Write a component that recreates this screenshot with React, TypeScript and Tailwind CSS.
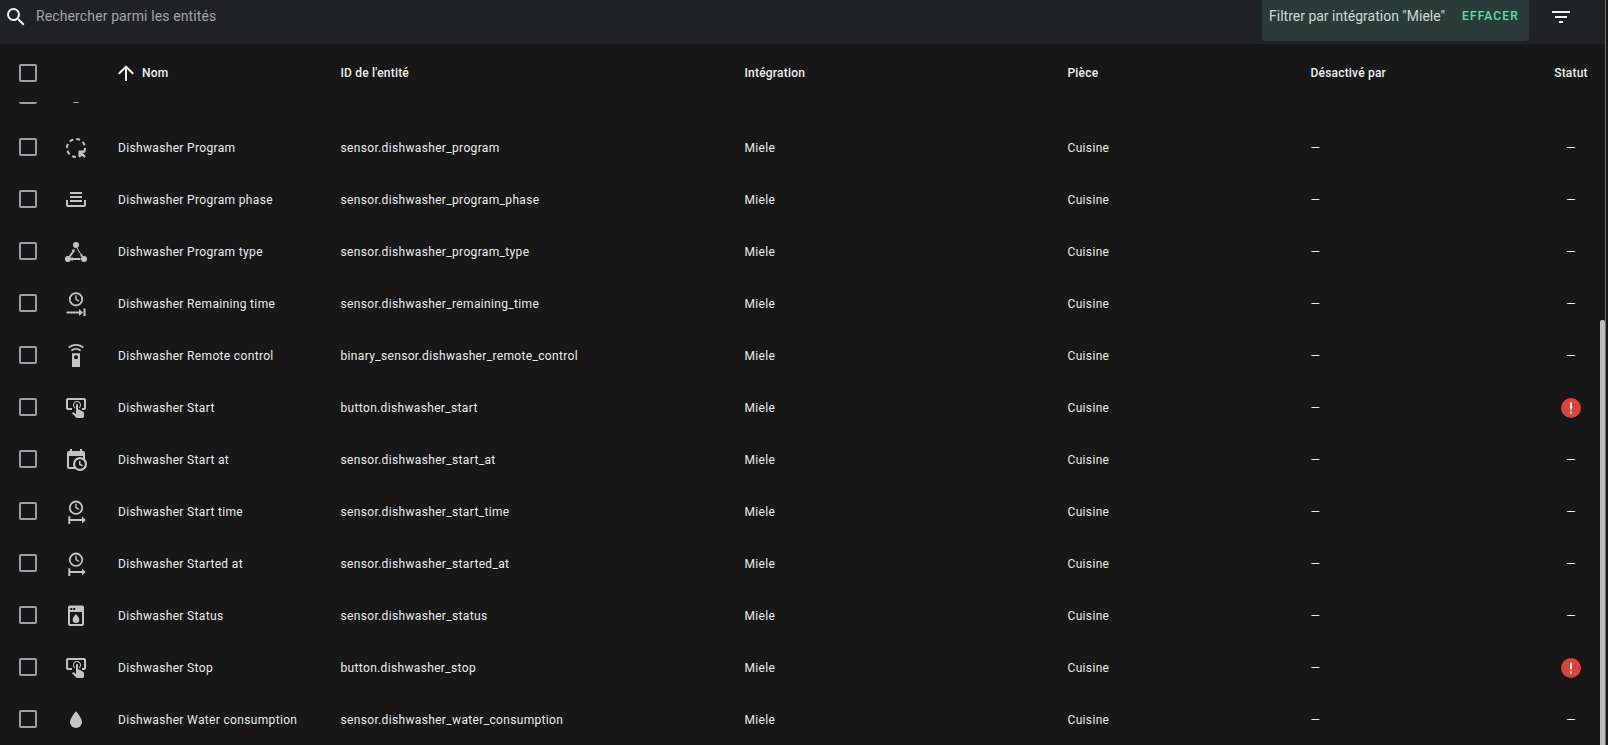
import React from "react";

const P = ({ d, s = 24, c = "" }: { d: string; s?: number; c?: string }) => (
  <svg viewBox="0 0 24 24" width={s} height={s} fill="currentColor" className={c}>
    <path d={d} />
  </svg>
);

const Ico = ({ children }: { children: React.ReactNode }) => (
  <svg viewBox="0 0 24 24" width={24} height={24} fill="currentColor" className="text-[#c4c4c4]">
    {children}
  </svg>
);

const tap =
  "M13 5C15.21 5 17 6.79 17 9C17 10.5 16.2 11.77 15 12.46V11.24C15.61 10.69 16 9.89 16 9C16 7.34 14.66 6 13 6S10 7.34 10 9C10 9.89 10.39 10.69 11 11.24V12.46C9.8 11.77 9 10.5 9 9C9 6.79 10.79 5 13 5M20 20.5C19.97 21.32 19.32 21.97 18.5 22H13C12.62 22 12.26 21.85 12 21.57L8 17.37L8.74 16.6C8.93 16.39 9.2 16.28 9.5 16.28H9.7L12 18V9C12 8.45 12.45 8 13 8S14 8.45 14 9V13.47L15.21 13.6L19.15 15.79C19.68 16.03 20 16.56 20 17.14V20.5M20 2H4C2.9 2 2 2.9 2 4V12C2 13.11 2.9 14 4 14H8V12L4 12L4 4H20L20 12H18V14H20V13.96L20.04 14C21.13 14 22 13.09 22 12V4C22 2.9 21.11 2 20 2Z";

const ClockTop = ({ cy }: { cy: number }) => (
  <>
    <circle cx="12" cy={cy} r="6.2" fill="none" stroke="currentColor" strokeWidth="1.8" />
    <path d={`M11.3 ${cy - 4}h1.400v3.600l2.700 1.600-.7 1.200-3.400-2z`} />
  </>
);

const icons: Record<string, React.ReactNode> = {
  program: (
    <>
      <circle cx="12" cy="12" r="9" fill="none" stroke="currentColor" strokeWidth="2" strokeDasharray="3.9 3.17" />
      <path d="M14.500 14.500h6.500v2.200h-2.600l3.500 3.500-1.700 1.500-3.500-3.500v2.600h-2.200z" />
    </>
  ),
  phase: <path d="M6 4h12v2H6zM6 8h12v2H6zM6 12h12v2H6zM2 12h2v5h16v-5h2v5a2 2 0 0 1-2 2H4a2 2 0 0 1-2-2z" />,
  type: (
    <>
      <circle cx="12" cy="5" r="3" />
      <circle cx="3.900" cy="19" r="3" />
      <circle cx="20" cy="19" r="3" />
      <path d="M13.300 7.500l4.200 7.100 1-.6.300 3.300-2.900-1.400 1-.6-4.200-7.100zM10 12l-4 5.600-1.500-1 4-5.600-1-.7 3-1.500.2 3.300zM8.500 18h8v2h-8v1.300L5.800 19l2.700-2.300z" />
    </>
  ),
  remaining: (
    <>
      <ClockTop cy={7.300} />
      <path d="M2.500 19.500H15V17l4 3.500-4 3.500v-2.500H2.500zM19.500 16.500h2V24h-2z" />
    </>
  ),
  remote: (
    <>
      <path d="M12 0c-3 0-5.700 1.100-7.800 3l1.100 1.300C7.100 2.600 9.400 1.700 12 1.700s4.900.9 6.700 2.600L19.800 3C17.700 1.100 15 0 12 0M12 4c-2 0-3.800.7-5.200 2l1.100 1.300C9 6.300 10.400 5.700 12 5.700s3 .6 4.100 1.600L17.200 6C15.800 4.700 14 4 12 4" />
      <path d="M8 9.300h8V23H8zm4 2a2 2 0 1 0 0 4 2 2 0 0 0 0-4" fillRule="evenodd" />
    </>
  ),
  tap: <path d={tap} />,
  calendar: (
    <path d="M15,13H16.5V15.82L18.94,17.23L18.19,18.53L15,16.69V13M19,8H5V19H9.67C9.24,18.09 9,17.07 9,16A7,7 0 0,1 16,9C17.07,9 18.09,9.24 19,9.67V8M5,21C3.89,21 3,20.1 3,19V5C3,3.89 3.89,3 5,3H6V1H8V3H16V1H18V3H19A2,2 0 0,1 21,5V11.1C22.24,12.36 23,14.09 23,16A7,7 0 0,1 16,23C14.09,23 12.36,22.24 11.1,21H5M16,11.15A4.85,4.85 0 0,0 11.15,16C11.15,18.68 13.32,20.85 16,20.85A4.85,4.85 0 0,0 20.85,16C20.85,13.32 18.68,11.15 16,11.15Z" />
  ),
  start: (
    <>
      <ClockTop cy={7.700} />
      <path d="M6.300 19H18V16.500l3.800 3.500-3.800 3.500V21H6.300zM4.300 16.300h2V24h-2z" />
    </>
  ),
  status: (
    <path
      fillRule="evenodd"
      d="M6 1.500h12a2 2 0 0 1 2 2v16.500a2 2 0 0 1-2 2H6a2 2 0 0 1-2-2V3.500a2 2 0 0 1 2-2m0 6.500v12h12V8zm.2-4v2h2V4zm3 0v2h2V4zm2.800 6s3.300 3.400 3.300 5.700a3.300 3.300 0 0 1-6.600 0c0-2.300 3.300-5.700 3.300-5.700"
    />
  ),
  water: <path d="M12,20A6,6 0 0,1 6,14C6,10 12,3.25 12,3.25C12,3.25 18,10 18,14A6,6 0 0,1 12,20Z" />,
};

const rows: [string, string, string, boolean?][] = [
  ["Dishwasher Program", "sensor.dishwasher_program", "program"],
  ["Dishwasher Program phase", "sensor.dishwasher_program_phase", "phase"],
  ["Dishwasher Program type", "sensor.dishwasher_program_type", "type"],
  ["Dishwasher Remaining time", "sensor.dishwasher_remaining_time", "remaining"],
  ["Dishwasher Remote control", "binary_sensor.dishwasher_remote_control", "remote"],
  ["Dishwasher Start", "button.dishwasher_start", "tap", true],
  ["Dishwasher Start at", "sensor.dishwasher_start_at", "calendar"],
  ["Dishwasher Start time", "sensor.dishwasher_start_time", "start"],
  ["Dishwasher Started at", "sensor.dishwasher_started_at", "start"],
  ["Dishwasher Status", "sensor.dishwasher_status", "status"],
  ["Dishwasher Stop", "button.dishwasher_stop", "tap", true],
  ["Dishwasher Water consumption", "sensor.dishwasher_water_consumption", "water"],
];

const Box = () => <div className="w-[18px] h-[18px] rounded-[2px] border-2 border-[#9aa0a8] shrink-0" />;

const Row = ({ name, id, icon, err }: { name: string; id: string; icon: string; err?: boolean }) => (
  <div className="flex items-center h-[52px] shrink-0 text-[12px] tracking-[0.34px] text-[#ececec]">
    <div className="w-[64px] pl-[19px] mb-[2px]">
      <Box />
    </div>
    <div className="w-[54px]">
      <Ico>{icons[icon]}</Ico>
    </div>
    <div className="w-[222.5px]">{name}</div>
    <div className="w-[404px]">{id}</div>
    <div className="w-[323px]">Miele</div>
    <div className="w-[243px]">Cuisine</div>
    <div className="w-[223.500px]">—</div>
    <div className="w-[74px] flex justify-center">
      {err ? (
        <svg viewBox="0 0 20 20" width={20} height={20}>
          <circle cx="10" cy="10" r="10" fill="#db4437" />
          <path d="M9 4.500h2v7H9zM9 13.500h2v2H9z" fill="#fff" />
        </svg>
      ) : (
        "—"
      )}
    </div>
  </div>
);

export default function App() {
  return (
    <div className="relative w-[1608px] h-[745px] overflow-hidden bg-[#171717] flex flex-col font-['Roboto',sans-serif]">
      <header className="h-[44px] shrink-0 bg-[#212226] flex items-start">
        <div className="flex items-center h-[33px] pl-[4px] flex-1">
          <P d="M9.5,3A6.5,6.5 0 0,1 16,9.5C16,11.11 15.41,12.59 14.44,13.73L14.71,14H15.5L20.5,19L19,20.5L14,15.5V14.71L13.73,14.44C12.59,15.41 11.11,16 9.5,16A6.5,6.5 0 0,1 3,9.5A6.5,6.5 0 0,1 9.5,3M9.5,5C7,5 5,7 5,9.5C5,12 7,14 9.5,14C12,14 14,12 14,9.5C14,7 12,5 9.5,5Z" c="text-[#f1f1f1]" />
          <span className="ml-[8px] text-[14px] tracking-[0.12px] text-[#a4a5a7]">Rechercher parmi les entités</span>
        </div>
        <div className="w-[267px] h-[41px] bg-[#2a3b38] rounded-b-[4px] flex items-start pl-[7px] pt-[7px]">
          <span className="text-[14px] leading-[18px] text-[#d0d8d5]">Filtrer par intégration "Miele"</span>
          <span className="ml-[17px] text-[12px] leading-[18px] font-medium tracking-[1.1px] text-[#58e0a8]">EFFACER</span>
        </div>
        <div className="w-[79px] h-[33px] flex items-center pl-[20px]">
          <P d="M6,13H18V11H6M3,6V8H21V6M10,18H14V16H10V18Z" c="text-[#f1f1f1]" />
        </div>
      </header>

      <div className="flex items-center h-[58px] shrink-0 text-[12px] font-medium tracking-[0.2px] text-[#f0f0f0]">
        <div className="w-[64px] pl-[19px]">
          <Box />
        </div>
        <div className="w-[50px]" />
        <div className="w-[226.500px] flex items-center">
          <P d="M13,20H11V8L5.5,13.5L4.08,12.08L12,4.16L19.92,12.08L18.5,13.5L13,8V20Z" />
          <span className="ml-[4px]">Nom</span>
        </div>
        <div className="w-[404px]">ID de l'entité</div>
        <div className="w-[323px]">Intégration</div>
        <div className="w-[243px]">Pièce</div>
        <div className="w-[223.500px]">Désactivé par</div>
        <div className="w-[74px] text-center">Statut</div>
      </div>

      <div className="flex-1 overflow-hidden flex flex-col">
        <div className="-mt-[32px] flex flex-col">
          <div className="flex items-center h-[52px] shrink-0 overflow-hidden" aria-hidden>
            <div className="w-[64px] pl-[19px] mb-[2px]">
              <Box />
            </div>
            <div className="w-[54px]">
              <Ico>
                <circle cx="12" cy="12.500" r="6.500" />
              </Ico>
            </div>
          </div>
          {rows.map(([n, id, ic, e]) => (
            <Row key={id} name={n} id={id} icon={ic} err={e} />
          ))}
        </div>
      </div>

      <div className="absolute right-0 top-0 bottom-0 w-[3px] bg-[#171717] border-l border-[#6e6e6e]" />
      <div className="absolute right-[3px] top-[320px] bottom-0 w-[5px] bg-[#bdbdbd] rounded-t-[2px]" />
    </div>
  );
}
